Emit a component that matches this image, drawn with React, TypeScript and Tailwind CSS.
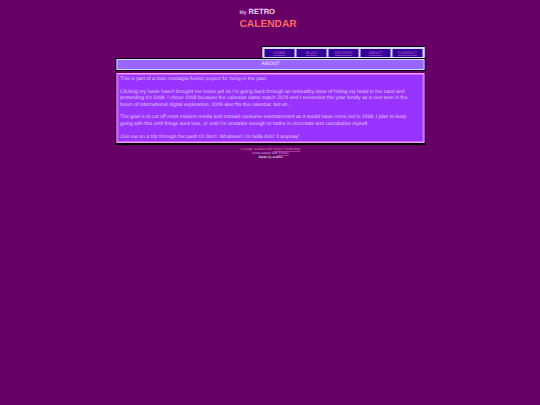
const links = ['HOME', 'BLOG', 'ARCHIVE', 'ABOUT', 'CONTACT'];

export default function App() {
  return (
    <div className="min-h-[405px] bg-[#660066] font-['Liberation_Sans',Arial,sans-serif] text-white [text-rendering:geometricPrecision]">
      <div className="mx-auto flex w-[308px] translate-x-[0.5px] flex-col">
        <div className="flex h-[47px] flex-col pl-[123px] pt-[6px] font-bold">
          <div className="flex items-baseline gap-[2px] leading-[11px]">
            <span className="text-[5px] text-[#e8b8e8]">My</span>
            <span className="text-[7.6px] text-[#f4d4f4]">RETRO</span>
          </div>
          <div className="text-[10.2px] leading-[11px] text-[#ff6666]">CALENDAR</div>
        </div>

        <div className="flex justify-end">
          <div className="flex gap-[2px] border border-[#d8d8ff] bg-[#d8d8ff] p-px shadow-[-1px_-1px_0_#000]">
            {links.map((l) => (
              <a
                key={l}
                href="#"
                className="flex h-[8px] w-[30px] items-center justify-center bg-[#330099] text-[4px] text-[#c868d8] underline decoration-[#c868d880]"
              >
                {l}
              </a>
            ))}
          </div>
        </div>

        <div className="flex h-[11px] items-center justify-center border border-[#d0d8ff] bg-[#9966ff] text-[5.2px] font-bold text-[#d8d8ff] shadow-[0_0_0_1px_#000]">
          ABOUT
        </div>

        <div className="mt-[3px] border border-[#ff99ff] bg-[#9933ff] pb-[2px] pl-[2.5px] pr-[12px] pt-[2px] text-[5.1px] leading-[6.4px] text-[#e0ccff] shadow-[inset_0_0_0_1px_#cc66ff,0_1px_0_1px_#000]">
          <p>This is part of a toxic nostalgia fueled project for living in the past.</p>
          <p className="mt-[6.4px]">
            Clicking my heels hasn't brought me home yet so I'm going back through an unhealthy dose of hiding my head in the sand and pretending it's 1998. I chose 1998 because the calendar dates match 2026 and I remember the year fondly as a new teen in the boom of international digital exploration. 2009 also fits the calendar, but eh...
          </p>
          <p className="mt-[6.4px]">
            The goal is to cut off most modern media and instead consume entertainment as it would have come out in 1998. I plan to keep going with this until things suck less, or until I'm unstable enough to bathe in chocolate and cannibalize myself.
          </p>
          <p className="mt-[6.4px]">Join me on a trip through the past! Or don't. Whatever! I'm hella doin' it anyway!</p>
        </div>

        <div className="mt-[3.5px] text-center text-[3.4px] leading-[4.4px]">
          <p className="text-[#e080c0]">
            Lovingly created with <a href="#" className="underline decoration-[#ff99cc60]">Yahoo! SiteBuilder</a>
          </p>
          <p className="text-[#ccbbff]">
            Icons tested with <a href="#" className="text-[#ff99ff] underline decoration-[#ff99ff60]">Firefox</a>
          </p>
          <p className="text-white">Made by eristhe</p>
        </div>
      </div>
    </div>
  );
}
